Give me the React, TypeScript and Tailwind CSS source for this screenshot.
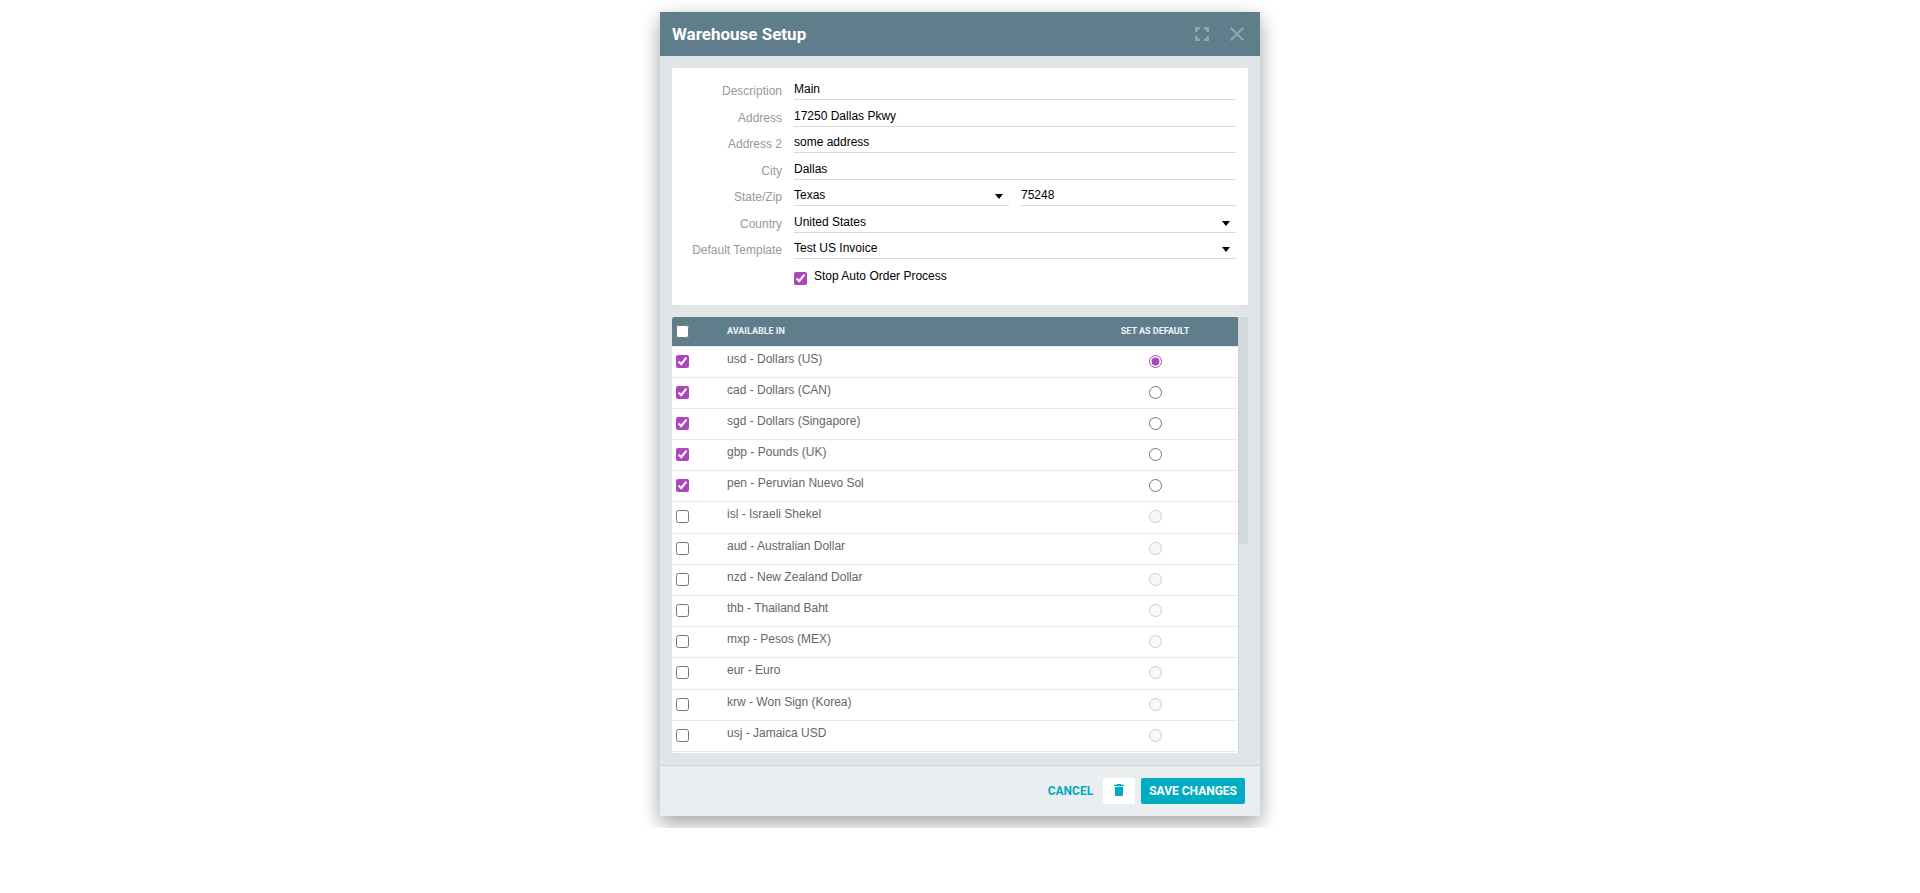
import { useState } from 'react'
import type { ReactNode } from 'react'

interface Currency {
  code: string
  label: string
}

const CURRENCIES: Currency[] = [
  { code: 'usd', label: 'Dollars (US)' },
  { code: 'cad', label: 'Dollars (CAN)' },
  { code: 'sgd', label: 'Dollars (Singapore)' },
  { code: 'gbp', label: 'Pounds (UK)' },
  { code: 'pen', label: 'Peruvian Nuevo Sol' },
  { code: 'isl', label: 'Israeli Shekel' },
  { code: 'aud', label: 'Australian Dollar' },
  { code: 'nzd', label: 'New Zealand Dollar' },
  { code: 'thb', label: 'Thailand Baht' },
  { code: 'mxp', label: 'Pesos (MEX)' },
  { code: 'eur', label: 'Euro' },
  { code: 'krw', label: 'Won Sign (Korea)' },
  { code: 'usj', label: 'Jamaica USD' },
]

const fieldClass =
  'block h-5 w-full min-w-0 appearance-none rounded-none border-b border-[#d9d9d9] bg-transparent pb-px text-xs text-black outline-none'

function Field({ id, label, children }: { id?: string; label?: string; children: ReactNode }) {
  return (
    <div className="flex flex-1 items-start">
      {label && (
        <label htmlFor={id} className="w-[110px] shrink-0 pt-[7px] text-right text-xs leading-4 text-[#999]">
          {label}
        </label>
      )}
      <div className={label ? 'ml-3 flex min-w-0 flex-1 gap-3 pt-1' : 'ml-[122px] flex pt-1'}>{children}</div>
    </div>
  )
}

function TextInput({ id, value, label }: { id: string; value: string; label?: string }) {
  return <input id={id} type="text" defaultValue={value} aria-label={label} className={fieldClass} />
}

function SelectInput({ id, value }: { id: string; value: string }) {
  return (
    <div className="relative min-w-0 flex-1">
      <select id={id} defaultValue={value} className={fieldClass}>
        <option>{value}</option>
      </select>
      <svg viewBox="0 0 8 5" className="pointer-events-none absolute top-2 right-[6px] h-[5px] w-2" aria-hidden="true">
        <path d="M0 0h8L4 5z" fill="#000" />
      </svg>
    </div>
  )
}

export default function App() {
  const [selected, setSelected] = useState(['usd', 'cad', 'sgd', 'gbp', 'pen'])
  const [primary, setPrimary] = useState('usd')

  const toggle = (code: string) => {
    setSelected((prev) => (prev.includes(code) ? prev.filter((c) => c !== code) : [...prev, code]))
  }

  return (
    <div className="overflow-hidden bg-white py-3 font-['Liberation_Sans',Arial,sans-serif]">
      <div className="mx-auto w-full max-w-[600px] bg-[#e0e5e8] shadow-[0_8px_17px_rgba(0,0,0,0.2),0_6px_20px_rgba(0,0,0,0.19)]">
        <header className="flex h-11 items-center justify-between bg-[#607d8b] pr-4 pl-3">
          <h1 className="pt-[2px] font-[Roboto,sans-serif] text-[17px] font-bold text-white">Warehouse Setup</h1>
          <div className="flex items-center gap-[21px] text-white/30">
            <button type="button" aria-label="Full screen">
              <svg viewBox="0 0 14 14" className="size-[14px]" fill="none" stroke="currentColor" strokeWidth="2.6">
                <path d="M1.300 5V1.300H5M9 1.300h3.700V5M12.700 9v3.700H9M5 12.700H1.300V9" />
              </svg>
            </button>
            <button type="button" aria-label="Close">
              <svg viewBox="0 0 14 14" className="size-[14px]" fill="none" stroke="currentColor" strokeWidth="2.2">
                <path d="M.8.8l12.400 12.400M13.200.8L.8 13.200" />
              </svg>
            </button>
          </div>
        </header>

        <main className="p-3">
          <form className="rounded-xs bg-white pt-2 pr-3 pb-[18px]">
            <div className="flex min-h-[211px] flex-col">
              <Field id="description" label="Description">
                <TextInput id="description" value="Main" />
              </Field>
              <Field id="address" label="Address">
                <TextInput id="address" value="17250 Dallas Pkwy" />
              </Field>
              <Field id="address2" label="Address 2">
                <TextInput id="address2" value="some address" />
              </Field>
              <Field id="city" label="City">
                <TextInput id="city" value="Dallas" />
              </Field>
              <Field id="state" label="State/Zip">
                <SelectInput id="state" value="Texas" />
                <div className="min-w-0 flex-1">
                  <TextInput id="zip" value="75248" label="Zip" />
                </div>
              </Field>
              <Field id="country" label="Country">
                <SelectInput id="country" value="United States" />
              </Field>
              <Field id="template" label="Default Template">
                <SelectInput id="template" value="Test US Invoice" />
              </Field>
              <Field>
                <label className="flex gap-[7px] pt-[2px] text-xs leading-4">
                  <input type="checkbox" defaultChecked className="mt-1 size-[13px] accent-[#ab47bc]" />
                  Stop Auto Order Process
                </label>
              </Field>
            </div>
          </form>

          <section className="mt-3 flex h-[436px] overflow-hidden rounded-xs">
            <div className="min-w-0 flex-1 overflow-hidden bg-white">
              <table className="h-[435px] w-full border-collapse">
                <thead>
                  <tr className="h-[29px] bg-[#607d8b] text-left font-[Roboto,sans-serif] text-[9px] text-white/90 uppercase">
                    <th className="w-[55px] pl-1">
                      <input type="checkbox" aria-label="Select all" className="block size-[13px]" />
                    </th>
                    <th className="font-bold">Available in</th>
                    <th className="w-[166px] text-center font-bold">Set as default</th>
                  </tr>
                </thead>
                <tbody>
                  {CURRENCIES.map(({ code, label }) => (
                    <tr key={code} className="h-[31px] border-y border-[#eaeaea] text-xs leading-4 text-[#666]">
                      <td className="pl-1 align-top">
                        <input
                          type="checkbox"
                          aria-label={code}
                          checked={selected.includes(code)}
                          onChange={() => toggle(code)}
                          className="mt-2 block size-[13px] accent-[#ab47bc]"
                        />
                      </td>
                      <td className="pt-1 align-top">
                        {code} - {label}
                      </td>
                      <td className="align-top">
                        <input
                          type="radio"
                          name="primary"
                          aria-label={`Default ${code}`}
                          checked={primary === code}
                          disabled={!selected.includes(code)}
                          onChange={() => setPrimary(code)}
                          className="mx-auto mt-2 block size-[13px] accent-[#ab47bc]"
                        />
                      </td>
                    </tr>
                  ))}
                </tbody>
              </table>
            </div>
            <div className="w-[10px] border-l border-[#ccd3d7] bg-[#e0e5e8]">
              <div className="h-[227px] bg-[#d2d9dd]" />
            </div>
          </section>
        </main>

        <footer className="flex h-[51px] items-center justify-end border-t border-[#d2d9dd] bg-[#eaeef1] pr-[15px] font-[Roboto,sans-serif] text-xs font-bold">
          <button type="button" className="h-[26px] px-[10px] text-[#00acc1] uppercase">
            Cancel
          </button>
          <button
            type="button"
            aria-label="Delete"
            className="mr-[6px] flex h-[26px] w-8 items-center justify-center rounded-xs bg-white text-[#00acc1]"
          >
            <svg viewBox="0 0 10 12" className="mb-[2px] h-3 w-[10px]" fill="currentColor">
              <path d="M3 0h4l.6.7H10V2H0V.7h2.4zM1 2.700h8v8C9 11.400 8.400 12 7.700 12H2.300C1.600 12 1 11.400 1 10.700z" />
            </svg>
          </button>
          <button type="button" className="h-[26px] rounded-xs bg-[#00acc1] px-2 text-white uppercase">
            Save Changes
          </button>
        </footer>
      </div>
    </div>
  )
}
